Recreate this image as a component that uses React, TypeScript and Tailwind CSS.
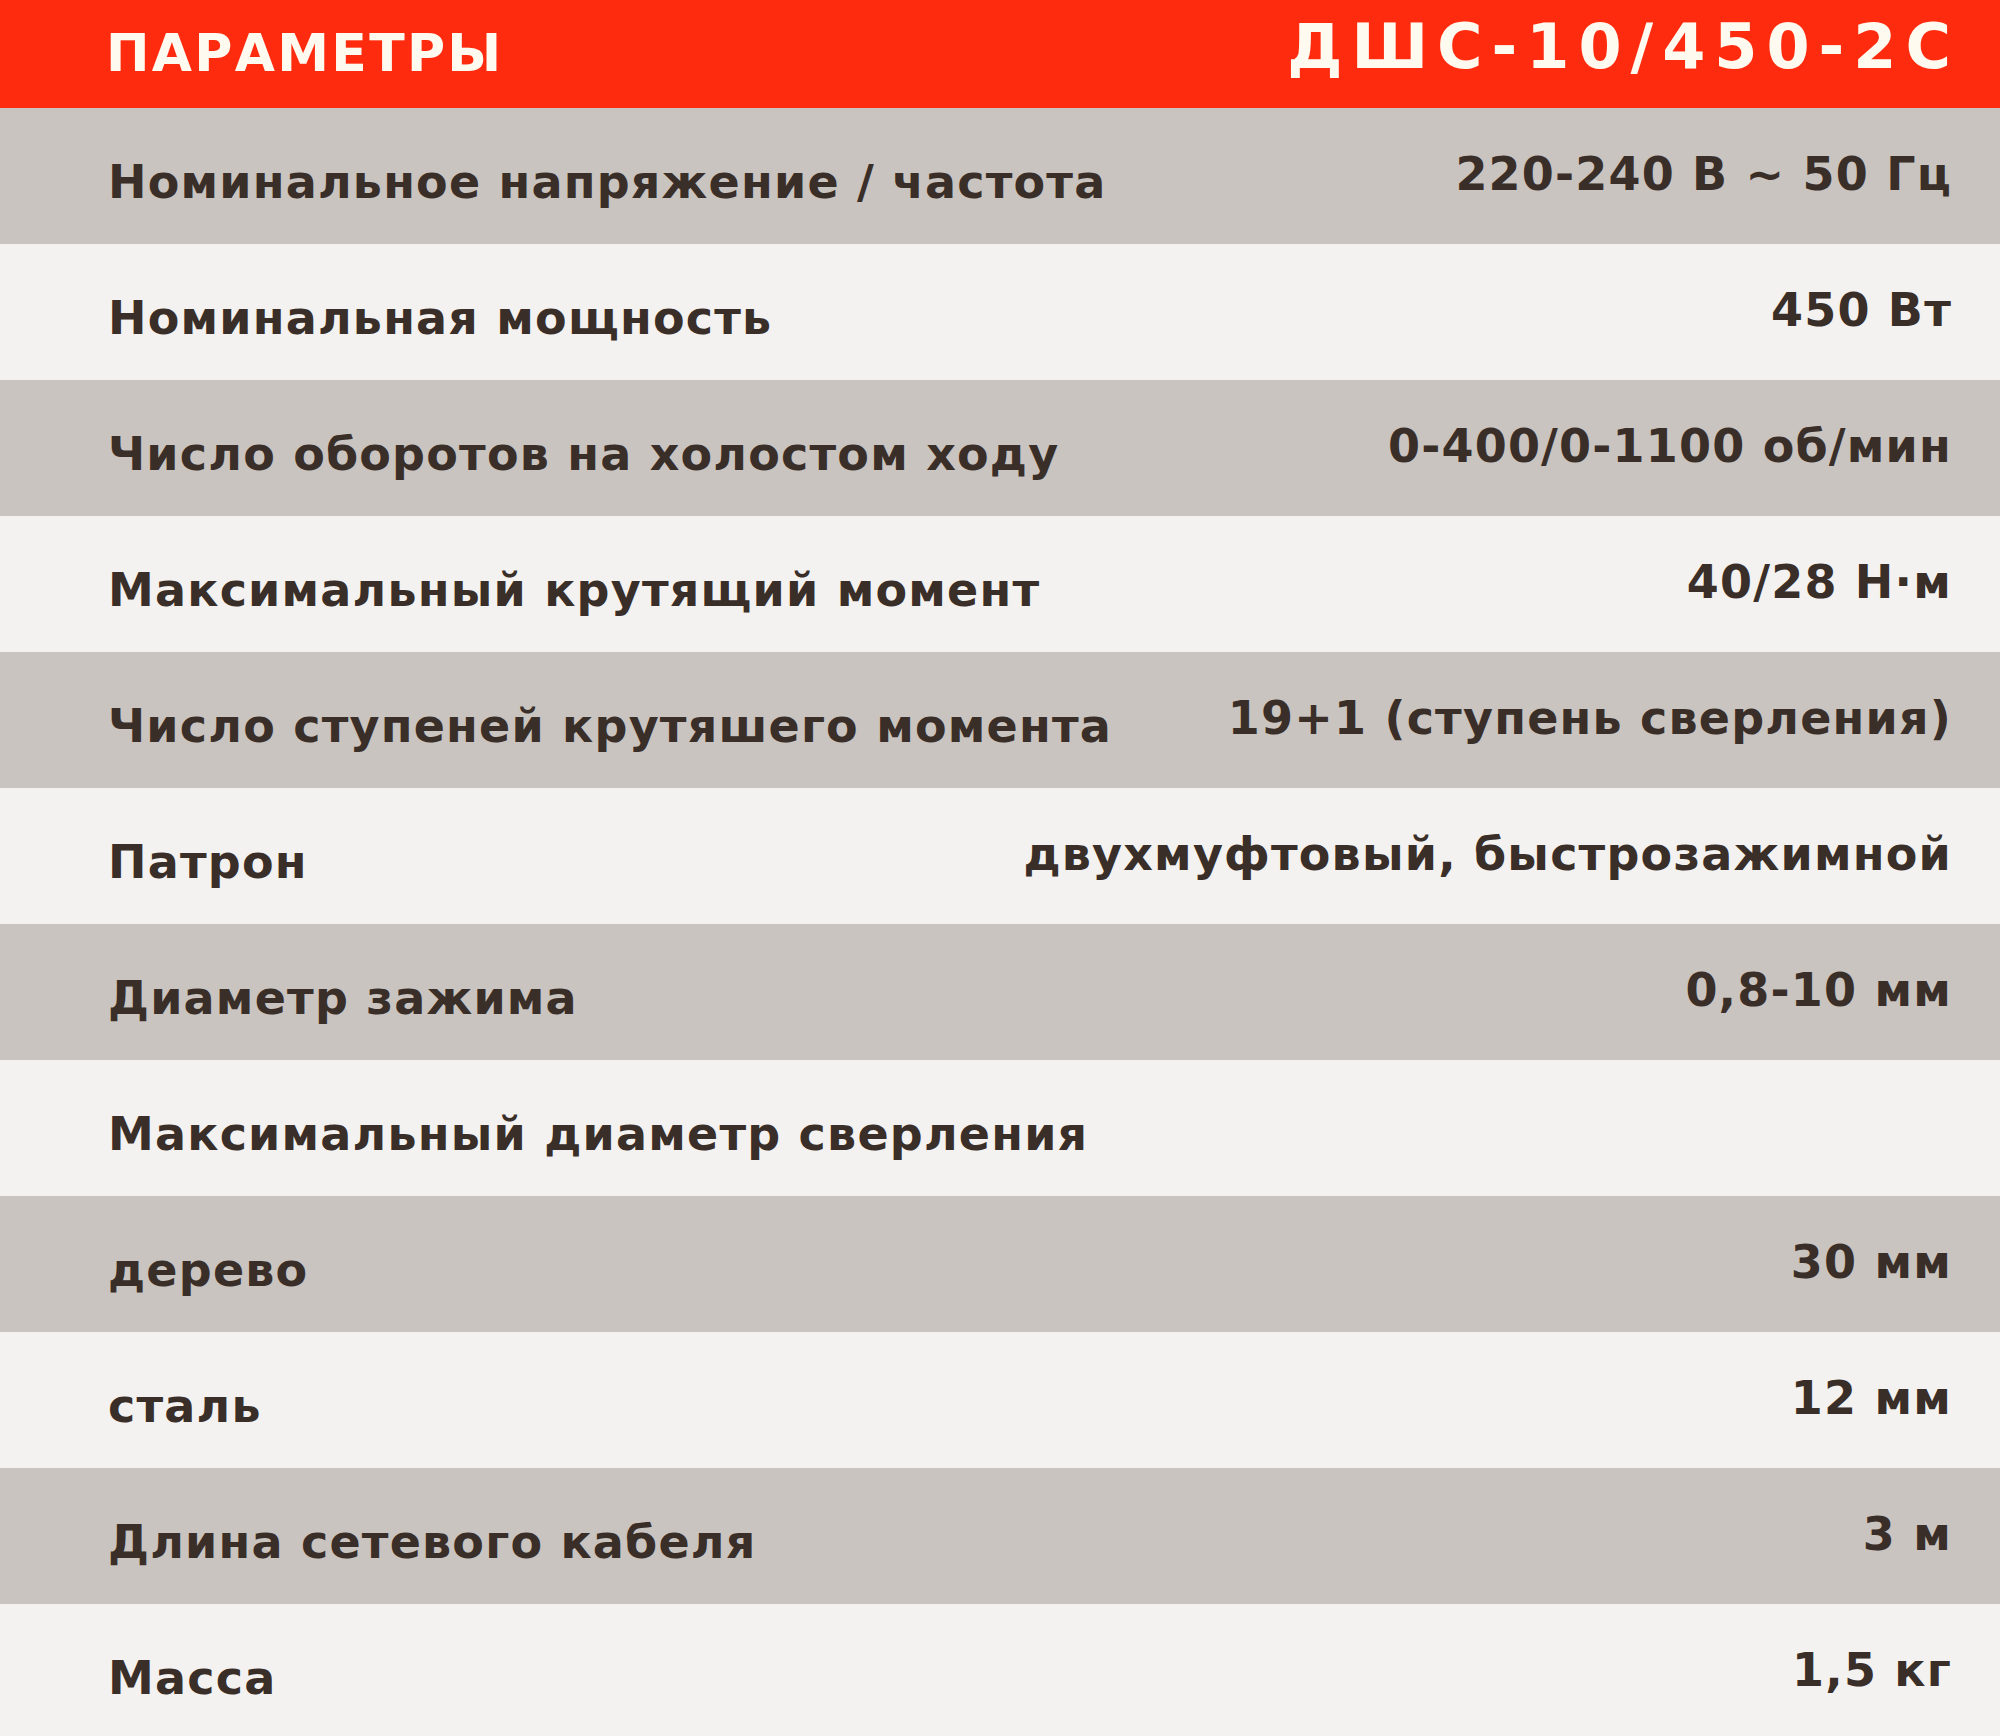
const specs: { label: string; value?: string }[] = [
  { label: 'Номинальное напряжение / частота', value: '220-240 В ~ 50 Гц' },
  { label: 'Номинальная мощность', value: '450 Вт' },
  { label: 'Число оборотов на холостом ходу', value: '0-400/0-1100 об/мин' },
  { label: 'Максимальный крутящий момент', value: '40/28 Н·м' },
  { label: 'Число ступеней крутяшего момента', value: '19+1 (ступень сверления)' },
  { label: 'Патрон', value: 'двухмуфтовый, быстрозажимной' },
  { label: 'Диаметр зажима', value: '0,8-10 мм' },
  { label: 'Максимальный диаметр сверления' },
  { label: 'дерево', value: '30 мм' },
  { label: 'сталь', value: '12 мм' },
  { label: 'Длина сетевого кабеля', value: '3 м' },
  { label: 'Масса', value: '1,5 кг' },
];

function SpecRow({ label, value, shaded }: { label: string; value?: string; shaded: boolean }) {
  return (
    <div
      className={`flex h-[136px] shrink-0 items-start justify-between pl-[108px] pr-[48px] ${shaded ? 'bg-[#c9c4c0]' : 'bg-[#f3f2f0]'}`}
    >
      <span className="pt-[51px] text-[46px] leading-[46px] font-bold tracking-[1.2px] text-[#3a2e29]">{label}</span>
      {value ? (
        <span className="pt-[43px] text-[46px] leading-[46px] font-bold tracking-[1.2px] text-[#3a2e29]">{value}</span>
      ) : null}
    </div>
  );
}

export default function App() {
  return (
    <div className="flex h-[1736px] w-[2000px] flex-col overflow-hidden bg-[#f3f2f0] font-['DejaVu_Sans',sans-serif]">
      <div className="flex h-[108px] shrink-0 items-start justify-between bg-[#ff2b0e] pl-[106px] pr-[40px]">
        <span className="pt-[27px] text-[52px] leading-[52px] font-bold tracking-[2.3px] text-[#fffaf0]">ПАРАМЕТРЫ</span>
        <span className="pt-[16px] text-[62px] leading-[62px] font-bold tracking-[9px] text-[#fffaf0]">ДШС-10/450-2С</span>
      </div>
      {specs.map((row, i) => (
        <SpecRow key={row.label} label={row.label} value={row.value} shaded={i % 2 === 0} />
      ))}
    </div>
  );
}
